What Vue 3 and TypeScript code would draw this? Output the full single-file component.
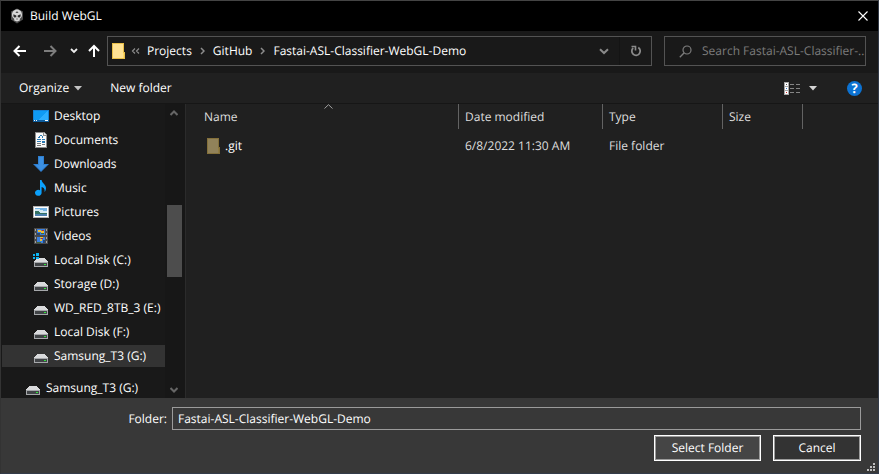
<script setup lang="ts">
import { ref } from 'vue'

type IconName = 'desktop' | 'documents' | 'downloads' | 'music' | 'pictures' | 'videos' | 'system' | 'drive'

interface Place {
  label: string
  icon: IconName
  selected?: boolean
  root?: boolean
}

const places: Place[] = [
  { label: 'Desktop', icon: 'desktop' },
  { label: 'Documents', icon: 'documents' },
  { label: 'Downloads', icon: 'downloads' },
  { label: 'Music', icon: 'music' },
  { label: 'Pictures', icon: 'pictures' },
  { label: 'Videos', icon: 'videos' },
  { label: 'Local Disk (C:)', icon: 'system' },
  { label: 'Storage (D:)', icon: 'drive' },
  { label: 'WD_RED_8TB_3 (E:)', icon: 'drive' },
  { label: 'Local Disk (F:)', icon: 'drive' },
  { label: 'Samsung_T3 (G:)', icon: 'drive', selected: true },
  { label: 'Samsung_T3 (G:)', icon: 'drive', root: true },
]

const crumbs: string[] = ['Projects', 'GitHub', 'Fastai-ASL-Classifier-WebGL-Demo']
const files = [{ name: '.git', modified: '6/8/2022 11:30 AM', type: 'File folder', size: '' }]
const folder = ref('Fastai-ASL-Classifier-WebGL-Demo')
const query = ref('')
const thumb = { top: '32.3%', height: '27.7%' }
</script>

<template>
  <div class="dialog">
    <header class="titlebar">
      <svg class="logo" width="14" height="16" viewBox="0 0 14 16">
        <path d="M7 0.5 13 3.5V11.5L7 15.5 1 11.5V3.5Z" fill="#4e4e4e" />
        <path d="M7 1.500C10 1.500 12 3.800 12 6.800 12 9 11 10 9.800 10.800V12.500L7 13.500 4.200 12.500V10.800C3 10 2 9 2 6.800 2 3.800 4 1.500 7 1.500Z" fill="#d8d8d8" />
        <path d="M3.400 6.200 6.300 7.600V9.300L4.200 9.500 3.400 8.200ZM10.600 6.200 7.700 7.600V9.300L9.800 9.500 10.600 8.200ZM5.400 4.200 7 3.400 8.600 4.200 7 5Z" fill="#2e2e2e" />
        <path d="M6.300 10.400H7.700V11.600H6.300Z" fill="#555" />
      </svg>
      <h1>Build WebGL</h1>
      <button class="close" type="button" aria-label="Close">
        <svg width="10" height="10" viewBox="0 0 10 10"><path d="M0.5 0.5 9.5 9.5M9.5 0.5 0.5 9.5" stroke="#fff" stroke-width="1.1" /></svg>
      </button>
    </header>

    <nav class="navbar">
      <div class="history">
        <button type="button" aria-label="Back">
          <svg width="14" height="12" viewBox="0 0 14 12"><path d="M13 6H2M6.5 1 1.5 6 6.5 11" fill="none" stroke="#fff" stroke-width="2" /></svg>
        </button>
        <button type="button" aria-label="Forward">
          <svg width="14" height="12" viewBox="0 0 14 12"><path d="M1 6H12M7.500 1 12.500 6 7.500 11" fill="none" stroke="#7d7d7d" stroke-width="2" /></svg>
        </button>
        <button class="recent" type="button" aria-label="Recent locations">
          <svg width="8" height="6" viewBox="0 0 8 6"><path d="M1 1 4 4 7 1" fill="none" stroke="#eee" stroke-width="1.8" /></svg>
        </button>
        <button class="up" type="button" aria-label="Up">
          <svg width="12" height="14" viewBox="0 0 12 14"><path d="M6 13V2M1 7 6 2 11 7" fill="none" stroke="#fff" stroke-width="2" /></svg>
        </button>
      </div>
      <div class="address">
        <svg class="folder" width="14" height="16" viewBox="0 0 14 16" shape-rendering="crispEdges">
          <path d="M0 0H12V9H13V16H0Z" fill="#e8bf48" />
          <path d="M1 1H11V15H1Z" fill="#ffe293" />
          <path d="M11 10H12V15H11Z" fill="#ffd766" />
        </svg>
        <svg class="overflow" width="9" height="6" viewBox="0 0 9 6"><path d="M4 0.500 1.500 3 4 5.500M8 0.500 5.500 3 8 5.500" fill="none" stroke="#8c8c8c" stroke-width="1.200" /></svg>
        <template v-for="(crumb, i) in crumbs" :key="crumb">
          <svg v-if="i > 0" class="sep" width="5" height="8" viewBox="0 0 5 8"><path d="M1 1 4 4 1 7" fill="none" stroke="#8c8c8c" stroke-width="1.500" /></svg>
          <a href="#">{{ crumb }}</a>
        </template>
        <button class="drop" type="button" aria-label="Previous locations">
          <svg width="10" height="7" viewBox="0 0 10 7"><path d="M1 1.200 5 5 9 1.200" fill="none" stroke="#8a8a8a" stroke-width="2" /></svg>
        </button>
        <button class="refresh" type="button" aria-label="Refresh">
          <svg width="12" height="12" viewBox="0 0 12 12">
            <path d="M8.300 2.600A4.200 4.200 0 1 1 3.200 3" fill="none" stroke="#8a8a8a" stroke-width="1.800" />
            <path d="M1.500 1.500H5.500V5.500" fill="none" stroke="#8a8a8a" stroke-width="1.600" />
          </svg>
        </button>
      </div>
      <label class="search">
        <svg width="13" height="13" viewBox="0 0 13 13"><circle cx="8" cy="5" r="4" fill="none" stroke="#7c7c7c" stroke-width="1.200" /><path d="M5 8 0.800 12.200" stroke="#7c7c7c" stroke-width="1.400" /></svg>
        <input v-model="query" type="text" aria-label="Search" placeholder="Search Fastai-ASL-Classifier-..." />
      </label>
    </nav>

    <div class="toolbar">
      <button class="organize" type="button">
        Organize
        <svg width="8" height="5" viewBox="0 0 8 5"><path d="M0 0H8L4 4.500Z" fill="#c4c4c4" /></svg>
      </button>
      <button type="button">New folder</button>
      <div class="tools">
        <button class="view" type="button" aria-label="Change view">
          <svg width="16" height="13" viewBox="0 0 16 13" shape-rendering="crispEdges">
            <path d="M0 0H5V13H0Z" fill="#a9a9a9" />
            <path d="M1 1H4V4H1ZM1 5H4V8H1ZM1 9H4V12H1Z" fill="#fff" />
            <path d="M2 2H3V3H2Z" fill="#555" /><path d="M2 6H3V7H2Z" fill="#2f78d0" /><path d="M2 10H3V11H2Z" fill="#d02020" />
            <path d="M6 2H10V3H6ZM12 2H16V3H12ZM6 6H10V7H6ZM12 6H16V7H12ZM6 10H10V11H6ZM12 10H16V11H12Z" fill="#858585" />
          </svg>
          <svg width="8" height="5" viewBox="0 0 8 5"><path d="M0 0H8L4 4.500Z" fill="#d4d4d4" /></svg>
        </button>
        <button class="help" type="button" aria-label="Help">?</button>
      </div>
    </div>

    <div class="body">
      <aside class="sidebar">
        <ul class="tree">
          <li v-for="(place, i) in places" :key="i" :class="{ selected: place.selected, root: place.root }">
            <svg v-if="place.icon === 'desktop'" width="16" height="16" viewBox="0 0 16 16" shape-rendering="crispEdges">
              <path d="M0 2H16V14H0Z" fill="#1683d8" />
              <path d="M1 3H15V12H1Z" fill="#0f9bf5" />
              <path d="M15 3V12H5Z" fill="#2caeff" />
              <path d="M0 12H16V14H0Z" fill="#0d5d9e" />
              <path d="M1 12H2V13H1ZM3 12H4V13H3ZM12 12H15V13H12Z" fill="#fff" />
            </svg>
            <svg v-else-if="place.icon === 'documents'" width="16" height="16" viewBox="0 0 16 16" shape-rendering="crispEdges">
              <path d="M2 0H11L14 3V16H2Z" fill="#8c8c8c" />
              <path d="M3 1H10V4H13V15H3Z" fill="#fafafa" />
              <path d="M11 1V3H13Z" fill="#e5e5e5" />
              <path d="M7 3H9V4H7ZM5 5H6V4H7V6H5ZM9 4H10V6H9ZM4 7H8V8H4ZM9 7H12V8H9ZM4 9H8V10H4ZM9 9H12V11H9Z" fill="#2b7ab4" />
              <path d="M4 11H8V12H4ZM4 13H8V14H4ZM9 12H12V13H9Z" fill="#777" />
            </svg>
            <svg v-else-if="place.icon === 'downloads'" width="16" height="16" viewBox="0 0 16 16">
              <path d="M5 0H11V8H16L8 16 0 8H5Z" fill="#2f7fd0" />
              <path d="M6 1H10V9H13.500L8 14.500 2.500 9H6Z" fill="#3c90e2" />
            </svg>
            <svg v-else-if="place.icon === 'music'" width="16" height="16" viewBox="0 0 16 16">
              <path d="M7 0H8.600C8.800 3 13 4.500 13 8 13 9.500 12.500 11 11.500 12 12 9 11 7.500 8.600 7V12.500A3.300 3 0 1 1 7 10.200Z" fill="#0ba0fb" />
            </svg>
            <svg v-else-if="place.icon === 'pictures'" width="16" height="16" viewBox="0 0 16 16" shape-rendering="crispEdges">
              <path d="M0 2H16V14H0Z" fill="#b4b4b4" />
              <path d="M1 3H15V13H1Z" fill="#fff" />
              <path d="M2 4H14V12H2Z" fill="#75b4e6" />
              <path d="M2 5H7V6H10V7H14V9H2Z" fill="#d2e9f3" />
              <path d="M2 7H5L8 9H14V10H2Z" fill="#347263" />
              <path d="M2 10H14V12H2Z" fill="#4a7fae" />
            </svg>
            <svg v-else-if="place.icon === 'videos'" width="16" height="16" viewBox="0 0 16 16" shape-rendering="crispEdges">
              <path d="M1 0H15V16H1Z" fill="#4b4b4b" />
              <path d="M2 1H3V3H2ZM2 5H3V7H2ZM2 9H3V11H2ZM2 13H3V15H2ZM13 1H14V3H13ZM13 5H14V7H13ZM13 9H14V11H13ZM13 13H14V15H13Z" fill="#a2a2a2" />
              <path d="M4 1H12V7H4ZM4 9H12V15H4Z" fill="#3a7fe0" />
              <path d="M5 2H8V4H5ZM8 3H11V5H8ZM7 9H10V10H7ZM7 11H9V13H7Z" fill="#edbf34" />
              <path d="M9 2H11V3H9ZM8 10H10V11H8Z" fill="#a43332" />
              <path d="M4 5H7V7H4ZM10 12H12V15H10Z" fill="#234779" />
              <path d="M8 5H11V6H8ZM4 14H8V15H4Z" fill="#3d6b3c" />
            </svg>
            <svg v-else width="16" height="16" viewBox="0 0 16 16" shape-rendering="crispEdges">
              <path d="M4 6H12L15 10V11H1V10Z" fill="#d9dadc" />
              <path d="M1 10H15V15H1Z" fill="#a5a7aa" />
              <path d="M2 11H14V14H2Z" fill="#414447" />
              <path d="M11 12H13V13H11Z" fill="#31e83b" />
              <path v-if="place.icon === 'system'" d="M0 2H2V4H0ZM3 1H6V4H3ZM0 5H2V7H0ZM3 5H6V7H3Z" fill="#0cb4f2" />
            </svg>
            <span>{{ place.label }}</span>
          </li>
        </ul>
        <div class="scrollbar">
          <button type="button" aria-label="Scroll up"><svg width="8" height="6" viewBox="0 0 8 6"><path d="M0.500 5 4 1.500 7.500 5" fill="none" stroke="#666" stroke-width="2" /></svg></button>
          <div class="track"><div class="thumb" :style="thumb"></div></div>
          <button type="button" aria-label="Scroll down"><svg width="8" height="6" viewBox="0 0 8 6"><path d="M0.500 1 4 4.500 7.500 1" fill="none" stroke="#666" stroke-width="2" /></svg></button>
        </div>
      </aside>

      <main class="listing">
        <table>
          <colgroup><col class="c-name" /><col class="c-date" /><col class="c-type" /><col class="c-size" /></colgroup>
          <thead>
            <tr>
              <th>
                Name
                <svg class="sort" width="9" height="5" viewBox="0 0 9 5"><path d="M0.500 4.500 4.500 0.700 8.500 4.500" fill="none" stroke="#a0a0a0" /></svg>
              </th>
              <th>Date modified</th>
              <th>Type</th>
              <th>Size</th>
            </tr>
          </thead>
          <tbody>
            <tr v-for="file in files" :key="file.name">
              <td>
                <div class="file">
                  <svg width="14" height="16" viewBox="0 0 14 16" shape-rendering="crispEdges">
                    <path d="M0 0H12V9H13V16H0Z" fill="#84703a" />
                    <path d="M1 1H11V15H1Z" fill="#91825a" />
                    <path d="M11 10H12V15H11Z" fill="#917c42" />
                  </svg>
                  {{ file.name }}
                </div>
              </td>
              <td>{{ file.modified }}</td>
              <td>{{ file.type }}</td>
              <td>{{ file.size }}</td>
            </tr>
          </tbody>
        </table>
      </main>
    </div>

    <footer class="footer">
      <div class="field">
        <label for="folder">Folder:</label>
        <input id="folder" v-model="folder" type="text" />
      </div>
      <div class="actions">
        <button class="primary" type="button">Select Folder</button>
        <button type="button">Cancel</button>
      </div>
      <svg class="grip" width="8" height="8" viewBox="0 0 8 8" shape-rendering="crispEdges">
        <path d="M6 0H8V2H6ZM3 3H5V5H3ZM6 3H8V5H6ZM0 6H2V8H0ZM3 6H5V8H3ZM6 6H8V8H6Z" fill="#bdbdbd" />
      </svg>
    </footer>
  </div>
</template>

<style>
body {
  margin: 0;
  background: #191919;
}
</style>

<style scoped>
* {
  box-sizing: border-box;
}
.dialog {
  display: flex;
  flex-direction: column;
  height: 100vh;
  border: 1px solid #333b49;
  border-top-color: #444;
  border-left-color: #333;
  background: #202020;
  color: #fff;
  font: 12px/16px "Segoe UI", "Open Sans", "Noto Sans", sans-serif;
  text-rendering: geometricPrecision;
}
svg {
  display: block;
  flex: none;
}
button,
input {
  margin: 0;
  padding: 0;
  border: 0;
  background: none;
  color: inherit;
  font: inherit;
  text-rendering: inherit;
}
button {
  display: flex;
  align-items: center;
  justify-content: center;
  white-space: nowrap;
}
.titlebar {
  display: flex;
  flex: none;
  align-items: center;
  height: 30px;
  padding-left: 9px;
  background: #000;
}
h1 {
  margin: 0 auto 0 6px;
  font-size: 12px;
  font-weight: 400;
}
.close {
  width: 30px;
  height: 30px;
}
.navbar {
  display: flex;
  flex: none;
  gap: 12px;
  height: 42px;
  padding: 5px 12px 7px 12px;
  background: #191919;
}
.history {
  display: flex;
  align-items: center;
  gap: 16px;
  width: 82px;
}
.history .recent {
  margin-left: -3px;
}
.history .up {
  margin-left: -6px;
}
.address {
  display: flex;
  flex: 1;
  align-items: center;
  min-width: 0;
  border: 1px solid #535353;
  padding-left: 4px;
}
.address a {
  color: inherit;
  text-decoration: none;
  white-space: nowrap;
}
.overflow {
  margin: 0 7px 0 5px;
}
.sep {
  margin: 0 8px;
}
.drop {
  width: 20px;
  height: 28px;
  margin: 0 5px 0 auto;
}
.refresh {
  width: 32px;
  height: 28px;
  border-left: 1px solid #141414;
}
.search {
  display: flex;
  align-items: center;
  gap: 10px;
  width: 202px;
  padding-left: 14px;
  border: 1px solid #535353;
}
.search input {
  flex: 1;
  min-width: 0;
  outline: 0;
}
.search input::placeholder {
  color: #7c7c7c;
  opacity: 1;
}
.toolbar {
  display: flex;
  flex: none;
  align-items: center;
  gap: 28px;
  height: 31px;
  padding: 0 16px 0 18px;
  border-bottom: 1px solid #161616;
}
.organize {
  gap: 5px;
}
.tools {
  display: flex;
  align-items: center;
  gap: 30px;
  margin-left: auto;
}
.view {
  gap: 9px;
}
.help {
  width: 15px;
  height: 15px;
  border-radius: 50%;
  background: #0c72d2;
  font-size: 13px;
  font-weight: 700;
}
.body {
  display: flex;
  flex: 1;
  min-height: 0;
}
.sidebar {
  display: flex;
  flex: none;
  width: 185px;
  border-right: 1px solid #2b2b2b;
  background: #191919;
}
.tree {
  flex: 1;
  min-width: 0;
  margin: 0;
  padding: 0 0 0 1px;
  overflow: hidden;
  list-style: none;
}
.tree li {
  display: flex;
  align-items: center;
  gap: 5px;
  height: 22px;
  margin: 1px 0 2px;
  padding-left: 31px;
  white-space: nowrap;
}
.tree .selected {
  background: #333;
}
.tree .root {
  margin-top: 10px;
  padding-left: 23px;
}
.scrollbar {
  display: flex;
  flex: none;
  flex-direction: column;
  width: 20px;
  padding: 0 3px 0 1px;
  background: #171717;
}
.scrollbar button {
  height: 17px;
}
.track {
  position: relative;
  flex: 1;
}
.thumb {
  position: absolute;
  left: 1px;
  right: 0;
  background: #4d4d4d;
}
.listing {
  flex: 1;
  min-width: 0;
  padding-left: 12px;
  overflow: hidden;
  color: #dedede;
}
table {
  width: 605px;
  border-collapse: separate;
  border-spacing: 0;
  table-layout: fixed;
}
.c-name {
  width: 261px;
}
.c-date {
  width: 144px;
}
.c-type {
  width: 120px;
}
.c-size {
  width: 80px;
}
th,
td {
  padding: 0 6px;
  text-align: left;
  font-weight: 400;
  white-space: nowrap;
}
th {
  position: relative;
  height: 25px;
  border-right: 1px solid #636363;
}
td {
  height: 34px;
}
.sort {
  position: absolute;
  top: 0;
  left: 50%;
  margin-left: -4px;
}
.file {
  display: flex;
  align-items: center;
  gap: 4px;
  padding-left: 3px;
  color: #fff;
}
.footer {
  position: relative;
  flex: none;
  padding: 9px 17px 12px 18px;
  background: #383838;
}
.field {
  display: flex;
  align-items: center;
}
.field label {
  width: 153px;
  padding-right: 5px;
  text-align: right;
}
.field input {
  flex: 1;
  min-width: 0;
  height: 23px;
  padding: 0 5px;
  border: 1px solid #9b9b9b;
}
.actions {
  display: flex;
  justify-content: flex-end;
  gap: 12px;
  margin-top: 5px;
}
.actions button {
  width: 88px;
  height: 26px;
  border: 1px solid #fff;
  outline: 1px solid #9b9b9b;
  outline-offset: -2px;
  background: #333;
}
.actions .primary {
  width: 107px;
  background: #454545;
}
.grip {
  position: absolute;
  right: 3px;
  bottom: 2px;
}
</style>
